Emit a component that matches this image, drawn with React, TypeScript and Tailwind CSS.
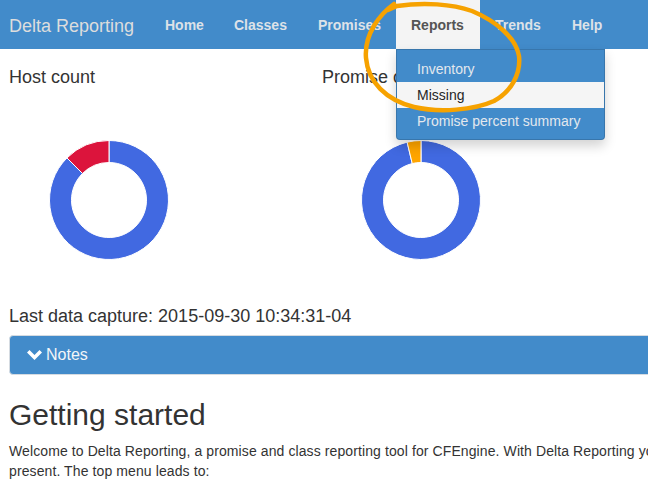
import React from "react";

function seg(cx: number, cy: number, R: number, r: number, a0: number, a1: number) {
  const p = (rad: number, a: number) => {
    const t = (a * Math.PI) / 180;
    return `${(cx + rad * Math.sin(t)).toFixed(3)} ${(cy - rad * Math.cos(t)).toFixed(3)}`;
  };
  const large = a1 - a0 > 180 ? 1 : 0;
  return `M ${p(R, a0)} A ${R} ${R} 0 ${large} 1 ${p(R, a1)} L ${p(r, a1)} A ${r} ${r} 0 ${large} 0 ${p(r, a0)} Z`;
}

function Donut({ split, color }: { split: number; color: string }) {
  return (
    <svg width="200" height="200" viewBox="0 0 200 200" className="block">
      <path d={seg(100, 100, 59.5, 37.5, 0, split)} fill="#4169e1" stroke="#ffffff" strokeWidth="1" />
      <path d={seg(100, 100, 59.5, 37.5, split, 360)} fill={color} stroke="#ffffff" strokeWidth="1" />
    </svg>
  );
}

const linkCls = "h-[49px] shrink-0 pl-[15px] pt-[15px] text-[14px] font-bold leading-[20px] text-[#dde2e8] whitespace-nowrap";

export default function App() {
  return (
    <div className="relative w-[648px] h-[486px] overflow-hidden bg-white font-['Liberation_Sans',Arial,sans-serif] text-[#333]">
      <nav className="flex h-[49px] bg-[#428bca]">
        <div className="w-[150px] shrink-0 pl-[9px] pr-[15px] pt-[16px] text-[18px] leading-[20px] text-[#dddddd] whitespace-nowrap">
          Delta Reporting
        </div>
        <div className={`${linkCls} w-[69px]`}>Home</div>
        <div className={`${linkCls} w-[84px]`}>Classes</div>
        <div className={`${linkCls} w-[93px]`}>Promises</div>
        <div className="relative h-[49px] w-[84px] shrink-0 bg-[#f4f4f4] pl-[15px] pt-[15px] text-[14px] font-bold leading-[20px] text-[#555555] whitespace-nowrap">
          Reports
          <div className="absolute left-0 top-full z-20 w-[209px] rounded-b-[4px] border border-[rgba(0,0,0,0.15)] bg-[#428bca] pt-[6px] pb-[5px] shadow-[0_6px_12px_rgba(0,0,0,0.175)]">
            <div className="px-[20px] py-[3px] text-[14px] font-normal leading-[20px] text-[#e3e8ee]">Inventory</div>
            <div className="bg-[#f5f5f5] px-[20px] py-[3px] text-[14px] font-normal leading-[20px] text-[#262626]">Missing</div>
            <div className="px-[20px] py-[3px] text-[14px] font-normal leading-[20px] text-[#e3e8ee]">Promise percent summary</div>
          </div>
        </div>
        <div className={`${linkCls} w-[77px]`}>Trends</div>
        <div className={`${linkCls} w-[70px]`}>Help</div>
      </nav>

      <main className="w-[960px] px-[9px]">
        <div className="grid grid-cols-[313px_313px]">
          <div>
            <div className="mt-[18px] text-[18px] leading-[20px]">Host count</div>
            <div className="mt-[13px]">
              <Donut split={315} color="#dc143c" />
            </div>
          </div>
          <div>
            <div className="mt-[18px] text-[18px] leading-[20px] whitespace-nowrap">Promise count</div>
            <div className="mt-[13px] -ml-[1px]">
              <Donut split={346.5} color="#ffa500" />
            </div>
          </div>
        </div>

        <div className="mt-[6px] text-[18px] leading-[20px] whitespace-nowrap">Last data capture: 2015-09-30 10:34:31-04</div>

        <div className="mt-[9px] flex h-[40px] w-[940px] items-center rounded-[4px] border border-[#d5dbe1] bg-[#428bca] px-[17px] text-[16px] leading-[18px] text-[#f2f5f8]">
          <svg width="15" height="10" viewBox="0 0 15 10" className="mr-[4px] shrink-0">
            <polygon points="0,2.6 2.5,0 7.5,5 12.5,0 15,2.6 7.5,10" fill="#ffffff" />
          </svg>
          <span>Notes</span>
        </div>

        <h2 className="mt-[23px] text-[30px] font-medium leading-[33px] whitespace-nowrap">Getting started</h2>
        <p className="mt-[10px] text-[14px] leading-[20px] tracking-[0.1px] whitespace-nowrap">
          Welcome to Delta Reporting, a promise and class reporting tool for CFEngine. With Delta Reporting you can query the history of promises and classes, past and
          <br />
          present. The top menu leads to:
        </p>
      </main>

      <svg className="pointer-events-none absolute left-0 top-0 z-50" width="648" height="486" viewBox="0 0 648 486">
        <path
          d="M 394 4 C 380 14, 364 34, 366 58 C 368 82, 386 100, 414 107 C 440 113, 474 110, 494 101 C 511 92, 521 74, 519 56 C 516 38, 496 21, 472 11 C 452 4, 424 2, 397 6 L 388 10"
          fill="none"
          stroke="#f6a200"
          strokeWidth="4.5"
          strokeLinecap="round"
          strokeLinejoin="round"
        />
      </svg>
    </div>
  );
}
